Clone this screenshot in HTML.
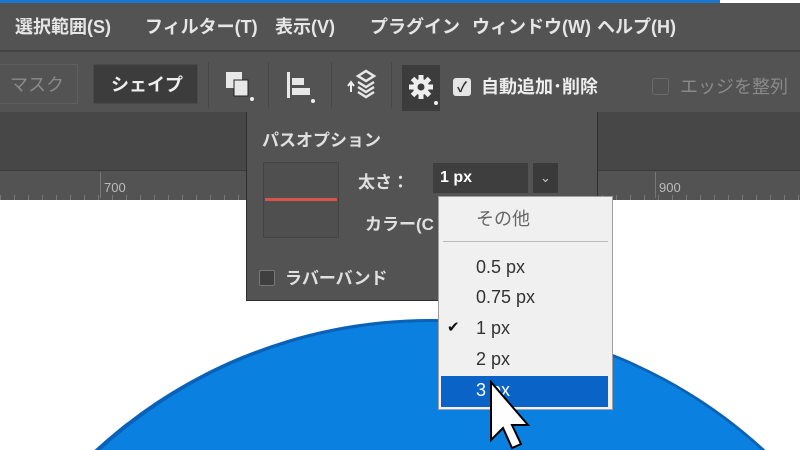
<!DOCTYPE html>
<html style="width:800px;height:450px;overflow:hidden"><head><meta charset="utf-8"><style>
*{margin:0;padding:0;box-sizing:border-box}
body{width:800px;height:450px;overflow:hidden;position:relative;background:#fff;font-family:"Liberation Sans","Noto Sans CJK JP",sans-serif}
.a{position:absolute}
.menu span{position:absolute;top:10px;font-size:18px;color:#e6e6e6;font-weight:bold;white-space:nowrap}
.li{position:absolute;left:476px;font-size:18px;color:#333}
</style></head><body>
<div class="a" style="left:0;top:0;width:800px;height:450px;overflow:hidden">
<div class="a" style="left:0;top:0;width:720px;height:3px;background:#1a78d0"></div>
<div class="a menu" style="left:0;top:3px;width:800px;height:47px;background:#535353">
<span style="left:15px">選択範囲(S)</span><span style="left:145px">フィルター(T)</span><span style="left:275px">表示(V)</span><span style="left:370px">プラグイン</span><span style="left:472px">ウィンドウ(W)</span><span style="left:597px">ヘルプ(H)</span>
</div>
<div class="a" style="left:0;top:50px;width:800px;height:2px;background:#444"></div>
<div class="a" style="left:0;top:52px;width:800px;height:60px;background:#535353"></div>
<div class="a" style="left:-5px;top:64px;width:83px;height:40px;border:1px solid #5e5e5e;color:#8a8a8a;font-size:18px;padding:6px 0 0 14px">マスク</div>
<div class="a" style="left:93px;top:64px;width:105px;height:40px;background:#3c3c3c;border:1px solid #4a4a4a;color:#eee;font-size:18px;font-weight:bold;padding:6px 0 0 17px">シェイプ</div>
<div class="a" style="left:208px;top:62px;width:1px;height:46px;background:#474747"></div>
<div class="a" style="left:268px;top:62px;width:1px;height:46px;background:#474747"></div>
<div class="a" style="left:331px;top:62px;width:1px;height:46px;background:#474747"></div>
<div class="a" style="left:391px;top:62px;width:1px;height:46px;background:#474747"></div>
<svg class="a" style="left:222px;top:68px" width="40" height="36"><rect x="4" y="4" width="16" height="16" fill="#e8e8e8"/><rect x="12" y="12" width="14" height="16" fill="#e8e8e8" stroke="#222" stroke-width="1"/><circle cx="30" cy="31" r="2" fill="#eee"/></svg>
<svg class="a" style="left:285px;top:70px" width="40" height="36"><rect x="2" y="2" width="3" height="26" fill="#e8e8e8"/><rect x="7" y="8" width="12" height="7" fill="#e8e8e8"/><rect x="7" y="18" width="18" height="7" fill="#e8e8e8"/><circle cx="28" cy="31" r="2" fill="#eee"/></svg>
<svg class="a" style="left:345px;top:68px" width="40" height="36"><path d="M3 18 L6 14 L9 18 M6 14 V24" stroke="#eee" stroke-width="2" fill="none"/><path d="M13 8 L21 3 L29 8 L21 13Z M13 14 L21 19 L29 14 M13 19 L21 24 L29 19 M13 24 L21 29 L29 24" stroke="#e8e8e8" stroke-width="2.5" fill="none"/></svg>
<div class="a" style="left:402px;top:65px;width:38px;height:46px;background:#3c3c3c"></div>
<svg class="a" style="left:408px;top:74px" width="26" height="26" viewBox="-13 -13 26 26"><g fill="#eee"><circle r="8"/><rect x="-2.5" y="-12" width="5" height="24"/><rect x="-2.5" y="-12" width="5" height="24" transform="rotate(45)"/><rect x="-2.5" y="-12" width="5" height="24" transform="rotate(90)"/><rect x="-2.5" y="-12" width="5" height="24" transform="rotate(135)"/></g><circle r="3.5" fill="#3c3c3c"/></svg>
<div class="a" style="left:434px;top:101px;width:4px;height:4px;background:#eee;border-radius:2px"></div>
<div class="a" style="left:453px;top:78px;width:18px;height:18px;background:#e6e6e6;border-radius:3px;color:#333;font-size:14px;text-align:center;line-height:18px;font-weight:bold">✓</div>
<div class="a" style="left:481px;top:73px;font-size:18px;color:#eee;font-weight:bold;white-space:nowrap">自動追加･削除</div>
<div class="a" style="left:652px;top:78px;width:17px;height:17px;border:1px solid #6a6a6a;border-radius:3px"></div>
<div class="a" style="left:680px;top:73px;font-size:18px;color:#8a8a8a;white-space:nowrap">エッジを整列</div>
<div class="a" style="left:0;top:112px;width:800px;height:58px;background:#474747"></div>
<div class="a" style="left:0;top:170px;width:800px;height:30px;background:#535353;border-top:1px solid #3a3a3a"></div>
<div class="a" style="left:100px;top:172px;width:1px;height:26px;background:#777"></div>
<div class="a" style="left:104px;top:180px;font-size:13px;color:#bbb">700</div>
<div class="a" style="left:655px;top:172px;width:1px;height:26px;background:#777"></div>
<div class="a" style="left:659px;top:180px;font-size:13px;color:#bbb">900</div>
<div class="a" style="left:0;top:195px;width:800px;height:5px;background:repeating-linear-gradient(90deg,#777 0 1px,transparent 1px 14px)"></div>
<div class="a" style="left:-65px;top:319px;width:990px;height:990px;border-radius:50%;background:#0a62b8"></div>
<div class="a" style="left:-59px;top:322px;width:980px;height:980px;border-radius:50%;background:#0a80e0"></div>
<div class="a" style="left:246px;top:112px;width:352px;height:189px;background:#535353;border:1px solid #2e2e2e;border-top:none"></div>
<div class="a" style="left:262px;top:126px;font-size:17px;color:#e0e0e0;font-weight:bold">パスオプション</div>
<div class="a" style="left:263px;top:162px;width:76px;height:76px;border:1px solid #444;background:#4f4f4f"></div>
<div class="a" style="left:265px;top:198px;width:72px;height:3px;background:#d9534a"></div>
<div class="a" style="left:358px;top:168px;font-size:17px;color:#e0e0e0;font-weight:bold">太さ：</div>
<div class="a" style="left:433px;top:163px;width:95px;height:30px;background:#3e3e3e"></div>
<div class="a" style="left:440px;top:169px;font-size:16px;color:#fff;font-weight:bold">1 px</div>
<div class="a" style="left:533px;top:163px;width:25px;height:30px;background:#3a3a3a;color:#ccc;text-align:center;font-size:13px;line-height:30px">⌄</div>
<div class="a" style="left:365px;top:210px;font-size:17px;color:#e0e0e0;font-weight:bold;white-space:nowrap">カラー(C</div>
<div class="a" style="left:259px;top:270px;width:16px;height:16px;border:1px solid #777;border-radius:2px;background:#3f3f3f"></div>
<div class="a" style="left:285px;top:264px;font-size:17px;color:#e0e0e0;font-weight:bold">ラバーバンド</div>
<div class="a" style="left:438px;top:196px;width:175px;height:214px;background:#f0f0f0;border:1px solid #a0a0a0"></div>
<div class="a" style="left:476px;top:205px;font-size:18px;color:#666">その他</div>
<div class="a" style="left:443px;top:241px;width:165px;height:1px;background:#bbb"></div>
<div class="li" style="top:257px">0.5 px</div>
<div class="li" style="top:287px">0.75 px</div>
<div class="a" style="left:447px;top:318px;font-size:15px;color:#111">✔</div>
<div class="li" style="top:318px">1 px</div>
<div class="li" style="top:349px">2 px</div>
<div class="a" style="left:441px;top:376px;width:167px;height:31px;background:#0a64c8"></div>
<div class="li" style="top:380px;color:#fff">3 px</div>
<svg class="a" style="left:488px;top:380px" width="60" height="70"><path d="M3 2 V60 L15 48 L24 68 L33 64 L24 45 L40 45 Z" fill="#fff" stroke="#000" stroke-width="2"/></svg>
</div>
</body></html>
